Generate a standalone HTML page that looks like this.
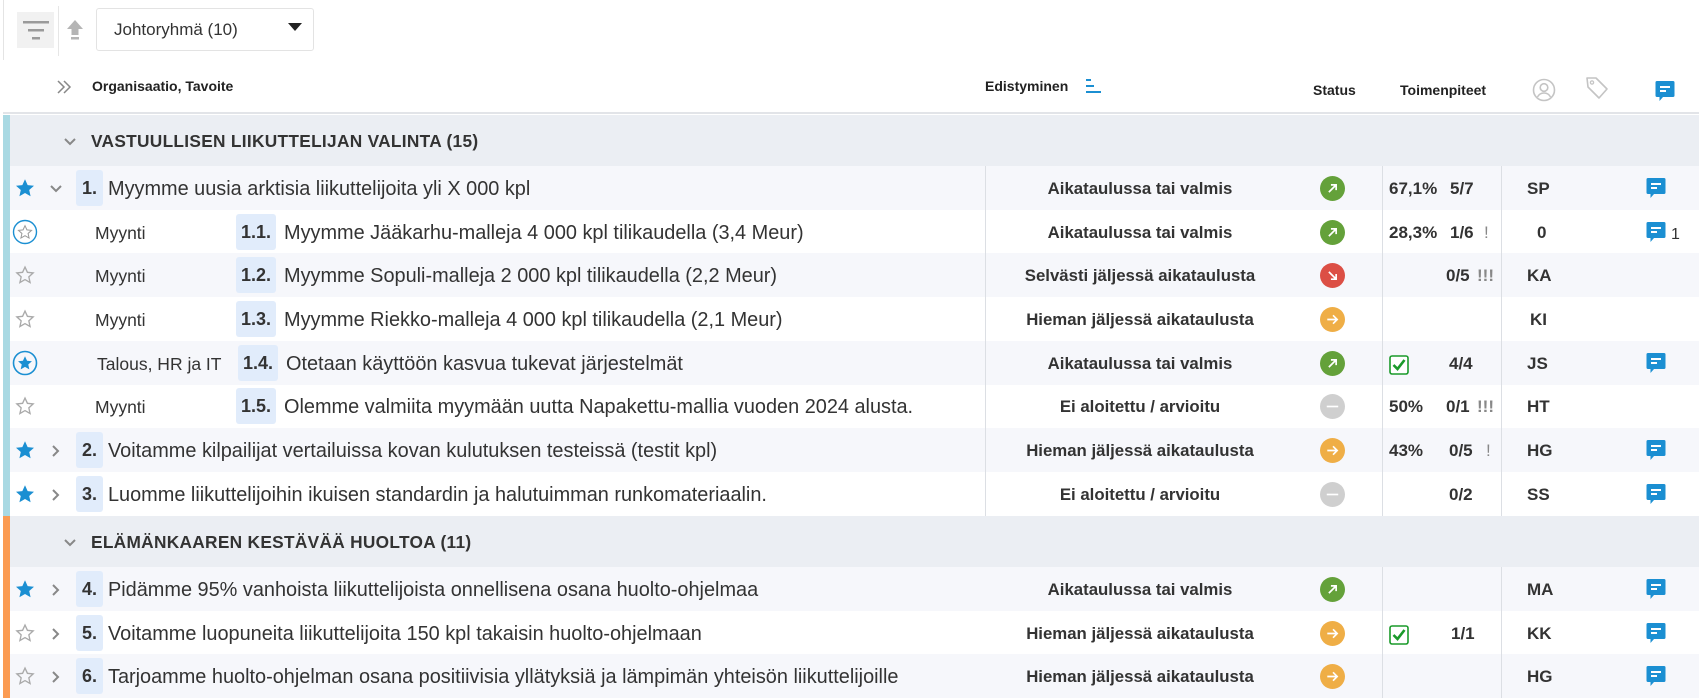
<!DOCTYPE html>
<html><head><meta charset="utf-8">
<style>
*{margin:0;padding:0;box-sizing:border-box}
body{width:1699px;height:698px;overflow:hidden;background:#fff;font-family:"Liberation Sans",Arial,sans-serif;color:#333;position:relative}
.a{position:absolute}
.row{position:absolute;left:10px;width:1689px;height:44px}
.odd{background:#f6f7fb}
.sec{position:absolute;left:10px;width:1689px;background:#ebeef3}
.t{position:absolute;top:1px;line-height:44px;font-size:19px;white-space:nowrap;color:#333}
.tt{font-size:19.9px}
.nb{position:absolute;top:4px;height:36px;line-height:36px;background:#e1ecfb;border-radius:3px;font-weight:bold;font-size:18px;text-align:center;color:#333}
.st{position:absolute;left:975px;width:330px;text-align:center;line-height:46px;font-weight:bold;font-size:16.8px;white-space:nowrap}
.b{font-weight:bold;font-size:17px}
.o{font-size:17.5px}
.vl{position:absolute;top:166px;width:1px;background:#dcdfe4}
</style></head><body>
<svg width="0" height="0" style="position:absolute">
<defs>
<symbol id="star" viewBox="0 0 24 24"><path d="M12 2.5l2.9 6.3 6.9.7-5.2 4.7 1.5 6.8L12 17.5 5.9 21l1.5-6.8L2.2 9.5l6.9-.7z"/></symbol>
<symbol id="chat" viewBox="0 0 20 24"><path d="M2 1h16a1.5 1.5 0 0 1 1.5 1.5v13a1.5 1.5 0 0 1-1.5 1.5H8l-3.5 4v-4H2A1.5 1.5 0 0 1 .5 15.5v-13A1.5 1.5 0 0 1 2 1z" fill="#1b8fd2"/><rect x="5" y="6" width="10" height="2" fill="#fff"/><rect x="5" y="10" width="6" height="2" fill="#fff"/></symbol>
<symbol id="chev" viewBox="0 0 16 16"><path d="M5 3l5 5-5 5" fill="none" stroke="#888" stroke-width="2"/></symbol>
<symbol id="chevd" viewBox="0 0 16 16"><path d="M3 5l5 5 5-5" fill="none" stroke="#888" stroke-width="2"/></symbol>
<symbol id="up" viewBox="0 0 24 24"><circle cx="12" cy="12" r="12" fill="#64a13a"/><path d="M8.5 15.5l7-7M10.5 8.5h5v5" fill="none" stroke="#fff" stroke-width="1.6"/></symbol>
<symbol id="down" viewBox="0 0 24 24"><circle cx="12" cy="12" r="12" fill="#dc4f45"/><path d="M8.5 8.5l7 7M15.5 10.5v5h-5" fill="none" stroke="#fff" stroke-width="1.6"/></symbol>
<symbol id="right" viewBox="0 0 24 24"><circle cx="12" cy="12" r="12" fill="#efae46"/><path d="M7 12h9.5M12.5 8l4 4-4 4" fill="none" stroke="#fff" stroke-width="1.6"/></symbol>
<symbol id="none" viewBox="0 0 24 24"><circle cx="12" cy="12" r="12" fill="#cfcfcf"/><path d="M6.5 12h11" stroke="#fff" stroke-width="1.6"/></symbol>
<symbol id="chk" viewBox="0 0 20 20"><rect x="1" y="1" width="18" height="18" rx="2" fill="#fff" stroke="#1a9a2a" stroke-width="1.6"/><path d="M4.5 10l4 4 7-9" fill="none" stroke="#1a9a2a" stroke-width="2.6"/></symbol>
</defs></svg>

<div class="a" style="left:3px;top:0;width:1696px;height:60px;border-left:1px solid #e4e4e4"></div>
<div class="a" style="left:17px;top:12px;width:37px;height:36px;background:#f1f1f1"></div>
<svg class="a" style="left:22px;top:19px" width="28" height="22"><rect x="1" y="2" width="26" height="2.5" fill="#9a9a9a"/><rect x="6" y="10" width="16" height="2.5" fill="#9a9a9a"/><rect x="10" y="18" width="8" height="2.5" fill="#9a9a9a"/></svg>
<div class="a" style="left:58px;top:6px;width:1px;height:50px;background:#e6e6e6"></div>
<svg class="a" style="left:66px;top:19px" width="18" height="22"><path d="M9 1L1 10h4.5v6h7v-6H17z" fill="#b5b5b5"/><rect x="5" y="18" width="8" height="2.5" fill="#b5b5b5"/></svg>
<div class="a" style="left:96px;top:8px;width:218px;height:43px;border:1px solid #e3e3e3;border-radius:3px"></div>
<div class="a" style="left:114px;top:8px;line-height:43px;font-size:17px;color:#333">Johtoryhmä (10)</div>
<svg class="a" style="left:288px;top:22px" width="14" height="10"><path d="M0 1h14L7 9z" fill="#222"/></svg>

<div class="a" style="left:3px;top:60px;width:1696px;height:54px;border-bottom:2px solid #e2e4e8"></div>
<svg class="a" style="left:56px;top:79px" width="16" height="16"><path d="M2 2l6 6-6 6M8 2l6 6-6 6" fill="none" stroke="#888" stroke-width="1.5"/></svg>
<div class="a" style="left:92px;top:78px;font-size:14px;font-weight:bold;color:#222">Organisaatio, Tavoite</div>
<div class="a" style="left:985px;top:78px;font-size:14px;font-weight:bold;color:#222">Edistyminen</div>
<svg class="a" style="left:1086px;top:78px" width="16" height="16"><rect x="0" y="1" width="5" height="2" fill="#1b8fd2"/><rect x="0" y="7" width="8" height="2" fill="#1b8fd2"/><rect x="0" y="13" width="15" height="2" fill="#1b8fd2"/></svg>
<div class="a" style="left:1313px;top:82px;font-size:14px;font-weight:bold;color:#222">Status</div>
<div class="a" style="left:1400px;top:82px;font-size:14px;font-weight:bold;color:#222">Toimenpiteet</div>
<svg class="a" style="left:1532px;top:78px" width="24" height="24"><circle cx="12" cy="12" r="10.5" fill="none" stroke="#c4c4c4" stroke-width="1.6"/><circle cx="12" cy="9.5" r="3.8" fill="none" stroke="#c4c4c4" stroke-width="1.6"/><path d="M5.5 19c1.5-3 4-4 6.5-4s5 1 6.5 4" fill="none" stroke="#c4c4c4" stroke-width="1.6"/></svg>
<svg class="a" style="left:1584px;top:75px" width="26" height="28"><path d="M3 3h9l11 11-8 9L4 12z" fill="none" stroke="#c4c4c4" stroke-width="1.6" stroke-linejoin="round"/><circle cx="8" cy="7.5" r="1.6" fill="none" stroke="#c4c4c4" stroke-width="1.3"/></svg>
<svg class="a" style="left:1655px;top:80px" width="20" height="24"><use href="#chat"/></svg>

<div class="a" style="left:3px;top:115px;width:7px;height:401px;background:#a9d9e3"></div>
<div class="a" style="left:3px;top:516px;width:7px;height:182px;background:#fb9b52"></div>

<div class="sec" style="top:115px;height:51px"></div>
<svg class="a" style="left:62px;top:134px" width="16" height="16"><use href="#chevd"/></svg>
<div class="a" style="left:91px;top:116px;line-height:51px;font-size:17.3px;font-weight:bold;color:#333;letter-spacing:.3px">VASTUULLISEN LIIKUTTELIJAN VALINTA (15)</div>

<div class="row odd" style="top:166px"></div>
<div class="row" style="top:210px"></div>
<div class="row odd" style="top:253px"></div>
<div class="row" style="top:297px"></div>
<div class="row odd" style="top:341px"></div>
<div class="row" style="top:384px"></div>
<div class="row odd" style="top:428px"></div>
<div class="row" style="top:472px"></div>
<div class="sec" style="top:516px;height:51px"></div>
<svg class="a" style="left:62px;top:535px" width="16" height="16"><use href="#chevd"/></svg>
<div class="a" style="left:91px;top:517px;line-height:51px;font-size:17.3px;font-weight:bold;color:#333;letter-spacing:.3px">ELÄMÄNKAAREN KESTÄVÄÄ HUOLTOA (11)</div>
<div class="row odd" style="top:567px"></div>
<div class="row" style="top:611px"></div>
<div class="row odd" style="top:654px"></div>

<div class="vl" style="left:985px;height:350px"></div>
<div class="vl" style="left:1382px;height:350px"></div>
<div class="vl" style="left:1501px;height:350px"></div>
<div class="vl" style="left:1382px;top:567px;height:131px"></div>
<div class="vl" style="left:1501px;top:567px;height:131px"></div>

<div class="a" style="left:0;top:166px;width:1699px;height:44px">
<svg class="a" style="left:14px;top:11px" width="22" height="22" fill="#1b8fd2"><use href="#star"/></svg>
<svg class="a" style="left:48px;top:15px" width="16" height="16"><use href="#chevd"/></svg>
<div class="nb" style="left:76px;width:27px">1.</div>
<div class="t tt" style="left:108px">Myymme uusia arktisia liikuttelijoita yli X 000 kpl</div>
<div class="st">Aikataulussa tai valmis</div>
<svg class="a" style="left:1320px;top:10px" width="25" height="25"><use href="#up"/></svg>
<div class="t b" style="left:1389px">67,1%</div><div class="t b" style="left:1450px">5/7</div>
<div class="t b" style="left:1527px">SP</div>
<svg class="a" style="left:1646px;top:11px" width="20" height="24"><use href="#chat"/></svg>
</div>
<div class="a" style="left:0;top:210px;width:1699px;height:44px">
<svg class="a" style="left:12px;top:9px" width="26" height="26"><circle cx="13" cy="13" r="11.5" fill="none" stroke="#1b8fd2" stroke-width="1.4"/><svg x="5" y="5" width="16" height="16" fill="none" stroke="#999" stroke-width="1.5"><use href="#star"/></svg></svg>
<div class="t o" style="left:95px">Myynti</div>
<div class="nb" style="left:236px;width:40px">1.1.</div>
<div class="t tt" style="left:284px">Myymme Jääkarhu-malleja 4 000 kpl tilikaudella (3,4 Meur)</div>
<div class="st">Aikataulussa tai valmis</div>
<svg class="a" style="left:1320px;top:10px" width="25" height="25"><use href="#up"/></svg>
<div class="t b" style="left:1389px">28,3%</div><div class="t b" style="left:1450px">1/6</div><div class="t" style="left:1484px;color:#888;font-size:17px">!</div>
<div class="t b" style="left:1537px">0</div>
<svg class="a" style="left:1646px;top:11px" width="20" height="24"><use href="#chat"/></svg>
<div class="t" style="left:1671px;top:3px;font-size:16px">1</div>
</div>
<div class="a" style="left:0;top:253px;width:1699px;height:44px">
<svg class="a" style="left:15px;top:12px" width="20" height="20" fill="none" stroke="#aaa" stroke-width="1.6"><use href="#star"/></svg>
<div class="t o" style="left:95px">Myynti</div>
<div class="nb" style="left:236px;width:40px">1.2.</div>
<div class="t tt" style="left:284px">Myymme Sopuli-malleja 2 000 kpl tilikaudella (2,2 Meur)</div>
<div class="st">Selvästi jäljessä aikataulusta</div>
<svg class="a" style="left:1320px;top:10px" width="25" height="25"><use href="#down"/></svg>
<div class="t b" style="left:1446px">0/5</div><div class="t" style="left:1477px;color:#888;font-size:17px;font-weight:bold">!!!</div>
<div class="t b" style="left:1527px">KA</div>
</div>
<div class="a" style="left:0;top:297px;width:1699px;height:44px">
<svg class="a" style="left:15px;top:12px" width="20" height="20" fill="none" stroke="#aaa" stroke-width="1.6"><use href="#star"/></svg>
<div class="t o" style="left:95px">Myynti</div>
<div class="nb" style="left:236px;width:40px">1.3.</div>
<div class="t tt" style="left:284px">Myymme Riekko-malleja 4 000 kpl tilikaudella (2,1 Meur)</div>
<div class="st">Hieman jäljessä aikataulusta</div>
<svg class="a" style="left:1320px;top:10px" width="25" height="25"><use href="#right"/></svg>
<div class="t b" style="left:1530px">KI</div>
</div>
<div class="a" style="left:0;top:341px;width:1699px;height:44px">
<svg class="a" style="left:12px;top:9px" width="26" height="26"><circle cx="13" cy="13" r="11.5" fill="none" stroke="#1b8fd2" stroke-width="1.6"/><svg x="4.5" y="4.5" width="17" height="17" fill="#1b8fd2"><use href="#star"/></svg></svg>
<div class="t o" style="left:97px">Talous, HR ja IT</div>
<div class="nb" style="left:238px;width:40px">1.4.</div>
<div class="t tt" style="left:286px">Otetaan käyttöön kasvua tukevat järjestelmät</div>
<div class="st">Aikataulussa tai valmis</div>
<svg class="a" style="left:1320px;top:10px" width="25" height="25"><use href="#up"/></svg>
<svg class="a" style="left:1389px;top:14px" width="20" height="20"><use href="#chk"/></svg>
<div class="t b" style="left:1449px">4/4</div>
<div class="t b" style="left:1527px">JS</div>
<svg class="a" style="left:1646px;top:11px" width="20" height="24"><use href="#chat"/></svg>
</div>
<div class="a" style="left:0;top:384px;width:1699px;height:44px">
<svg class="a" style="left:15px;top:12px" width="20" height="20" fill="none" stroke="#aaa" stroke-width="1.6"><use href="#star"/></svg>
<div class="t o" style="left:95px">Myynti</div>
<div class="nb" style="left:236px;width:40px">1.5.</div>
<div class="t tt" style="left:284px">Olemme valmiita myymään uutta Napakettu-mallia vuoden 2024 alusta.</div>
<div class="st">Ei aloitettu / arvioitu</div>
<svg class="a" style="left:1320px;top:10px" width="25" height="25"><use href="#none"/></svg>
<div class="t b" style="left:1389px">50%</div><div class="t b" style="left:1446px">0/1</div><div class="t" style="left:1477px;color:#888;font-size:17px;font-weight:bold">!!!</div>
<div class="t b" style="left:1527px">HT</div>
</div>
<div class="a" style="left:0;top:428px;width:1699px;height:44px">
<svg class="a" style="left:14px;top:11px" width="22" height="22" fill="#1b8fd2"><use href="#star"/></svg>
<svg class="a" style="left:48px;top:15px" width="16" height="16"><use href="#chev"/></svg>
<div class="nb" style="left:76px;width:27px">2.</div>
<div class="t tt" style="left:108px">Voitamme kilpailijat vertailuissa kovan kulutuksen testeissä (testit kpl)</div>
<div class="st">Hieman jäljessä aikataulusta</div>
<svg class="a" style="left:1320px;top:10px" width="25" height="25"><use href="#right"/></svg>
<div class="t b" style="left:1389px">43%</div><div class="t b" style="left:1449px">0/5</div><div class="t" style="left:1486px;color:#888;font-size:17px">!</div>
<div class="t b" style="left:1527px">HG</div>
<svg class="a" style="left:1646px;top:11px" width="20" height="24"><use href="#chat"/></svg>
</div>
<div class="a" style="left:0;top:472px;width:1699px;height:44px">
<svg class="a" style="left:14px;top:11px" width="22" height="22" fill="#1b8fd2"><use href="#star"/></svg>
<svg class="a" style="left:48px;top:15px" width="16" height="16"><use href="#chev"/></svg>
<div class="nb" style="left:76px;width:27px">3.</div>
<div class="t tt" style="left:108px">Luomme liikuttelijoihin ikuisen standardin ja halutuimman runkomateriaalin.</div>
<div class="st">Ei aloitettu / arvioitu</div>
<svg class="a" style="left:1320px;top:10px" width="25" height="25"><use href="#none"/></svg>
<div class="t b" style="left:1449px">0/2</div>
<div class="t b" style="left:1527px">SS</div>
<svg class="a" style="left:1646px;top:11px" width="20" height="24"><use href="#chat"/></svg>
</div>
<div class="a" style="left:0;top:567px;width:1699px;height:44px">
<svg class="a" style="left:14px;top:11px" width="22" height="22" fill="#1b8fd2"><use href="#star"/></svg>
<svg class="a" style="left:48px;top:15px" width="16" height="16"><use href="#chev"/></svg>
<div class="nb" style="left:76px;width:27px">4.</div>
<div class="t tt" style="left:108px">Pidämme 95% vanhoista liikuttelijoista onnellisena osana huolto-ohjelmaa</div>
<div class="st">Aikataulussa tai valmis</div>
<svg class="a" style="left:1320px;top:10px" width="25" height="25"><use href="#up"/></svg>
<div class="t b" style="left:1527px">MA</div>
<svg class="a" style="left:1646px;top:11px" width="20" height="24"><use href="#chat"/></svg>
</div>
<div class="a" style="left:0;top:611px;width:1699px;height:44px">
<svg class="a" style="left:15px;top:12px" width="20" height="20" fill="none" stroke="#aaa" stroke-width="1.6"><use href="#star"/></svg>
<svg class="a" style="left:48px;top:15px" width="16" height="16"><use href="#chev"/></svg>
<div class="nb" style="left:76px;width:27px">5.</div>
<div class="t tt" style="left:108px">Voitamme luopuneita liikuttelijoita 150 kpl takaisin huolto-ohjelmaan</div>
<div class="st">Hieman jäljessä aikataulusta</div>
<svg class="a" style="left:1320px;top:10px" width="25" height="25"><use href="#right"/></svg>
<svg class="a" style="left:1389px;top:14px" width="20" height="20"><use href="#chk"/></svg>
<div class="t b" style="left:1451px">1/1</div>
<div class="t b" style="left:1527px">KK</div>
<svg class="a" style="left:1646px;top:11px" width="20" height="24"><use href="#chat"/></svg>
</div>
<div class="a" style="left:0;top:654px;width:1699px;height:44px">
<svg class="a" style="left:15px;top:12px" width="20" height="20" fill="none" stroke="#aaa" stroke-width="1.6"><use href="#star"/></svg>
<svg class="a" style="left:48px;top:15px" width="16" height="16"><use href="#chev"/></svg>
<div class="nb" style="left:76px;width:27px">6.</div>
<div class="t tt" style="left:108px">Tarjoamme huolto-ohjelman osana positiivisia yllätyksiä ja lämpimän yhteisön liikuttelijoille</div>
<div class="st">Hieman jäljessä aikataulusta</div>
<svg class="a" style="left:1320px;top:10px" width="25" height="25"><use href="#right"/></svg>
<div class="t b" style="left:1527px">HG</div>
<svg class="a" style="left:1646px;top:11px" width="20" height="24"><use href="#chat"/></svg>
</div>
</body></html>
